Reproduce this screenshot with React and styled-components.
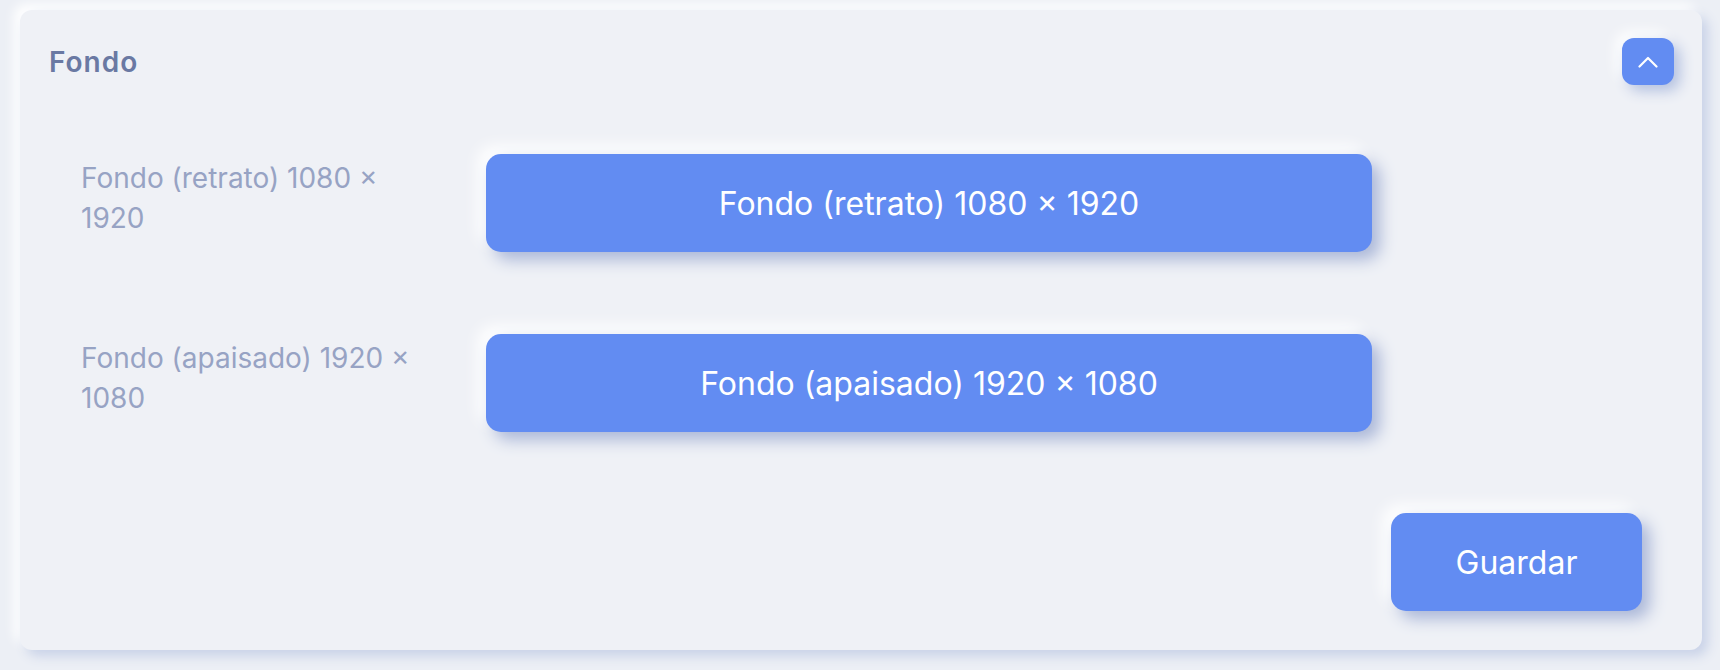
import React from 'react'
import styled, { createGlobalStyle } from 'styled-components'

const GlobalStyle = createGlobalStyle`
  html, body {
    margin: 0;
    padding: 0;
    background: #eceff5;
    font-family: Inter, "Noto Sans", sans-serif;
  }
`

const Page = styled.div`
  padding: 10px 18px 19px 20px;
`

const Card = styled.section`
  background: #eff1f6;
  border-radius: 12px;
  box-shadow: 6px 6px 12px #c9d2e8, -6px -6px 12px #ffffff;
  padding: 28px 28px 39px 29px;
`

const Header = styled.div`
  display: flex;
  align-items: center;
  justify-content: space-between;
`

const Title = styled.h2`
  margin: 0;
  font-size: 28px;
  font-weight: 600;
  letter-spacing: 1px;
  color: #6a79a3;
`

const IconButton = styled.button`
  width: 52px;
  height: 47px;
  border: none;
  border-radius: 12px;
  background: #628cf2;
  display: flex;
  align-items: center;
  justify-content: center;
  box-shadow: 6px 6px 14px #b4c1e0, -6px -6px 14px #ffffff;
  cursor: pointer;
`

const Rows = styled.div`
  display: flex;
  flex-direction: column;
  gap: 82px;
  margin-top: 69px;
  padding-left: 32px;
`

const Row = styled.div`
  display: flex;
  align-items: flex-start;
`

const Label = styled.div`
  width: 405px;
  padding-right: 60px;
  box-sizing: border-box;
  margin-top: 4px;
  font-size: 28px;
  line-height: 40px;
  color: #97a3c4;
`

const Upload = styled.button`
  width: 886px;
  height: 98px;
  border: none;
  border-radius: 15px;
  background: #628cf2;
  color: #fff;
  font-family: inherit;
  font-size: 32px;
  box-shadow: 8px 8px 16px #aab7d8, -8px -8px 16px #ffffff;
  cursor: pointer;
`

const Footer = styled.div`
  display: flex;
  justify-content: flex-end;
  margin-top: 81px;
  padding-right: 32px;
`

const SaveButton = styled(Upload)`
  width: 251px;
`

const ChevronUp = () => (
  <svg width="20" height="12" viewBox="0 0 20 12" fill="none">
    <path d="M1.5 10.5L10 2L18.5 10.5" stroke="#fff" strokeWidth="2.2" strokeLinecap="round" strokeLinejoin="round" />
  </svg>
)

const fields = [
  'Fondo (retrato) 1080 × 1920',
  'Fondo (apaisado) 1920 × 1080',
]

const App = () => {
  return (
    <>
      <GlobalStyle />
      <Page>
        <Card>
          <Header>
            <Title>Fondo</Title>
            <IconButton aria-label="Contraer">
              <ChevronUp />
            </IconButton>
          </Header>
          <Rows>
            {fields.map((f) => (
              <Row key={f}>
                <Label>{f}</Label>
                <Upload>{f}</Upload>
              </Row>
            ))}
          </Rows>
          <Footer>
            <SaveButton>Guardar</SaveButton>
          </Footer>
        </Card>
      </Page>
    </>
  )
}

export default App
